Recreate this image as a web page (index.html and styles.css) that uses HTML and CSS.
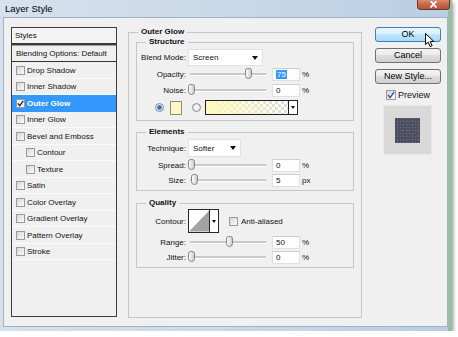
FILE: index.html
```html
<!DOCTYPE html>
<html lang="en">
<head>
  <meta charset="UTF-8">
  <title>Layer Style</title>
  <link rel="stylesheet" href="styles.css">
</head>
<body>
  <div class="window">
    <div class="titlebar">
      <span class="title">Layer Style</span>
      <div class="close">
        <svg width="9" height="7" viewBox="0 0 9 7"><path d="M1.5 0 L7.5 6.5 M7.5 0 L1.5 6.5" stroke="#fff" stroke-width="1.8"/></svg>
      </div>
    </div>

    <div class="client">
      <!-- styles list -->
      <div class="styles">
        <div class="styles-head">Styles</div>
        <div class="styles-blend">Blending Options: Default</div>
        <div class="style-item"><span class="check"></span>Drop Shadow</div>
        <div class="style-item"><span class="check"></span>Inner Shadow</div>
        <div class="style-item selected"><span class="check on"><svg width="7" height="7" viewBox="0 0 7 7"><path d="M0.8 3.4 L2.7 5.6 L6.3 0.8" fill="none" stroke="#222" stroke-width="1.3"/></svg></span>Outer Glow</div>
        <div class="style-item"><span class="check"></span>Inner Glow</div>
        <div class="style-item"><span class="check"></span>Bevel and Emboss</div>
        <div class="style-item sub"><span class="check"></span>Contour</div>
        <div class="style-item sub"><span class="check"></span>Texture</div>
        <div class="style-item"><span class="check"></span>Satin</div>
        <div class="style-item"><span class="check"></span>Color Overlay</div>
        <div class="style-item"><span class="check"></span>Gradient Overlay</div>
        <div class="style-item"><span class="check"></span>Pattern Overlay</div>
        <div class="style-item"><span class="check"></span>Stroke</div>
      </div>

      <!-- settings -->
      <fieldset class="group main">
        <legend>Outer Glow</legend>

        <fieldset class="group inner structure">
          <legend>Structure</legend>
          <div class="row blend-row">
            <span class="lbl">Blend Mode:</span>
            <div class="select blend"><span>Screen</span><i class="arrow"></i></div>
          </div>
          <div class="row slider-row">
            <span class="lbl">Opacity:</span>
            <div class="slider"><span class="thumb" style="left: 75%"></span></div>
            <div class="num"><span class="sel">75</span></div>
            <span class="unit">%</span>
          </div>
          <div class="row slider-row gap2">
            <span class="lbl">Noise:</span>
            <div class="slider"><span class="thumb" style="left: 0%"></span></div>
            <div class="num">0</div>
            <span class="unit">%</span>
          </div>
          <div class="row color-row">
            <span class="radio on"></span>
            <span class="swatch"></span>
            <span class="radio second"></span>
            <div class="gradient">
              <span class="grad-fill"></span>
              <span class="grad-arrow"><i class="arrow"></i></span>
            </div>
          </div>
        </fieldset>

        <fieldset class="group inner elements">
          <legend>Elements</legend>
          <div class="row tech-row">
            <span class="lbl">Technique:</span>
            <div class="select technique"><span>Softer</span><i class="arrow"></i></div>
          </div>
          <div class="row slider-row">
            <span class="lbl">Spread:</span>
            <div class="slider"><span class="thumb" style="left: 0%"></span></div>
            <div class="num">0</div>
            <span class="unit">%</span>
          </div>
          <div class="row slider-row">
            <span class="lbl">Size:</span>
            <div class="slider"><span class="thumb" style="left: 4%"></span></div>
            <div class="num">5</div>
            <span class="unit">px</span>
          </div>
        </fieldset>

        <fieldset class="group inner quality">
          <legend>Quality</legend>
          <div class="row contour-row">
            <span class="lbl">Contour:</span>
            <div class="contour">
              <svg width="21" height="22" viewBox="0 0 21 22"><polygon points="0,22 21,0 21,22" fill="#a3a3a3"/></svg>
              <span class="contour-arrow"><i class="arrow"></i></span>
            </div>
            <span class="check aa"></span>
            <span class="aa-text">Anti-aliased</span>
          </div>
          <div class="row slider-row gap2">
            <span class="lbl">Range:</span>
            <div class="slider"><span class="thumb" style="left: 50%"></span></div>
            <div class="num">50</div>
            <span class="unit">%</span>
          </div>
          <div class="row slider-row">
            <span class="lbl">Jitter:</span>
            <div class="slider"><span class="thumb" style="left: 0%"></span></div>
            <div class="num">0</div>
            <span class="unit">%</span>
          </div>
        </fieldset>
      </fieldset>

      <!-- buttons -->
      <div class="side">
        <button class="btn ok">OK</button>
        <button class="btn">Cancel</button>
        <button class="btn">New Style...</button>
        <div class="preview-check">
          <span class="check big"><svg width="8" height="8" viewBox="0 0 8 8"><path d="M1 4 L3.1 6.6 L7.2 0.8" fill="none" stroke="#2b56a8" stroke-width="1.4"/></svg></span>
          <span>Preview</span>
        </div>
        <div class="preview-box"><span class="preview-swatch"></span></div>
        <svg class="cursor" width="11" height="15" viewBox="0 0 11 15"><path d="M0.5 0.5 L0.5 11.5 L3.2 9.1 L5.1 13.6 L7.1 12.7 L5.2 8.4 L8.8 8.4 Z" fill="#fff" stroke="#000" stroke-width="1"/></svg>
      </div>
    </div>
  </div>
</body>
</html>
```

FILE: styles.css
```css
body {
  margin: 0;
  background: #fff;
  font-family: "Liberation Sans", Arial, sans-serif;
  font-size: 8px;
  color: #111;
}
.window {
  width: 452px;
  height: 331px;
  box-sizing: border-box;
  padding: 0 4px 4px 3px;
  background:
    linear-gradient(to right, transparent 448px, #98bea2 448px),
    linear-gradient(to right, #d6e1ec, #c8d8e8 55%, #b9cee3);
  box-shadow: 1px 2px 4px rgba(0,0,0,0.45);
  display: flex;
  flex-direction: column;
}
.titlebar {
  height: 17px;
  flex: none;
  display: flex;
  justify-content: space-between;
  align-items: flex-start;
}
.title {
  font-size: 9.5px;
  line-height: 11px;
  padding: 3px 0 0 2px;
  color: #000;
}
.close {
  width: 33px;
  height: 10px;
  margin-right: -2px;
  box-sizing: border-box;
  border: 1px solid #6e3322;
  border-top: none;
  border-radius: 0 0 4px 4px;
  background: linear-gradient(#d98b70, #c7664b 50%, #b9533a);
  display: flex;
  justify-content: center;
  align-items: flex-start;
  padding-top: 1px;
}
.client {
  width: 445px;
  height: 310px;
  box-sizing: border-box;
  border: 1px solid #9fb1c3;
  background: #f0f0f0;
  display: flex;
  align-items: flex-start;
  padding: 9px 0 0 7px;
}

/* styles list */
.styles {
  width: 106px;
  height: 290px;
  box-sizing: border-box;
  border: 1px solid #3c3c3c;
  background: #f0f0f0;
  flex: none;
}
.styles-head {
  height: 15px;
  line-height: 15px;
  padding-left: 3px;
  border-bottom: 2px solid #3a3a3a;
  background: #f4f4f4;
}
.styles-blend {
  height: 15px;
  line-height: 15px;
  padding-left: 4px;
  border-top: 1px solid #a0a0a0;
  border-bottom: 1px solid #333;
}
.style-item {
  height: 16.5px;
  display: flex;
  align-items: center;
  padding-left: 4px;
  box-shadow: inset 0 -1px 0 #fafafa;
}
.style-item.sub {
  padding-left: 14px;
}
.style-item.selected {
  background: #3399ff;
  color: #fff;
  font-weight: bold;
  box-shadow: none;
}
.check {
  width: 9px;
  height: 9px;
  box-sizing: border-box;
  border: 1px solid #9a9a9a;
  background: linear-gradient(135deg, #d6d6d6, #fbfbfb);
  margin-right: 2px;
  flex: none;
  display: flex;
  align-items: center;
  justify-content: center;
}
.check.on {
  background: #f4f4f4;
}

/* group boxes */
.group {
  border: 1px solid #c6c6c6;
  margin: 0;
  padding: 0;
  min-width: 0;
}
.group legend {
  font-weight: bold;
  line-height: 10px;
  padding: 0 3px;
}
.main {
  width: 234px;
  height: 291px;
  box-sizing: border-box;
  margin-left: 11px;
  padding: 0 7px;
  flex: none;
}
.main > legend {
  margin-left: 2px;
}
.inner > legend {
  margin-left: 9px;
}
.structure {
  padding-bottom: 5px;
}
.elements {
  margin-top: 6px;
  padding-bottom: 3px;
}
.quality {
  margin-top: 7px;
  padding-bottom: 3px;
}
.row {
  display: flex;
  align-items: center;
}
.lbl {
  width: 49px;
  text-align: right;
  flex: none;
}
.blend-row {
  margin-top: 2px;
  height: 17px;
}
.tech-row {
  margin-top: 2px;
  height: 18px;
}
.slider-row {
  margin-top: 1px;
  height: 14px;
}
.slider-row.gap2 {
  margin-top: 2px;
}
.select {
  height: 100%;
  margin-left: 2px;
  box-sizing: border-box;
  border: 1px solid #e2e2e2;
  background: #fff;
  display: flex;
  align-items: center;
  justify-content: space-between;
  padding: 0 4px;
}
.select.blend {
  width: 75px;
}
.select.technique {
  width: 53px;
}
.arrow {
  width: 0;
  height: 0;
  border-left: 3px solid transparent;
  border-right: 3px solid transparent;
  border-top: 4px solid #111;
}
.slider {
  position: relative;
  width: 76px;
  height: 2px;
  margin-left: 4px;
  background: #c9c9c9;
  border-bottom: 1px solid #fff;
  flex: none;
}
.thumb {
  position: absolute;
  top: -5px;
  width: 7px;
  height: 11px;
  margin-left: -2px;
  box-sizing: border-box;
  border: 1px solid #838383;
  border-radius: 3px 3px 4px 4px;
  background: linear-gradient(to right, #fdfdfd, #cbcbcb);
}
.num {
  width: 28px;
  height: 13px;
  margin-left: 6px;
  box-sizing: border-box;
  border: 1px solid #e0e0e0;
  border-top-color: #cdcdcd;
  background: #fff;
  padding-left: 3px;
  line-height: 11px;
  flex: none;
}
.sel {
  background: #3399ff;
  color: #fff;
  padding: 0 1px;
}
.unit {
  margin-left: 2px;
}
.color-row {
  margin-top: 3px;
  height: 15px;
  padding-left: 18px;
}
.radio {
  width: 9px;
  height: 9px;
  box-sizing: border-box;
  border-radius: 50%;
  border: 1px solid #8c8c8c;
  background: radial-gradient(circle, #fff, #d6d6d6);
  flex: none;
}
.radio.on {
  background: radial-gradient(circle, #2c6fd2 0, #2c6fd2 1.8px, #dedede 2.6px, #f6f6f6);
}
.radio.second {
  margin-left: 10px;
}
.swatch {
  width: 12px;
  height: 14px;
  margin-left: 6px;
  box-sizing: border-box;
  border: 1px solid #8a8a8a;
  background: #fdf5c2;
}
.gradient {
  width: 93px;
  height: 15px;
  margin-left: 4px;
  box-sizing: border-box;
  border: 1px solid #222;
  display: flex;
}
.grad-fill {
  flex: 1;
  background:
    linear-gradient(to right, #fff8bd, rgba(255,248,189,0)),
    repeating-conic-gradient(#dcdcdc 0 25%, #fff 0 50%) 0 0 / 6px 6px;
}
.grad-arrow {
  width: 8px;
  border-left: 1px solid #222;
  background: #fff;
  display: flex;
  align-items: center;
  justify-content: center;
}
.grad-arrow .arrow {
  border-left-width: 2px;
  border-right-width: 2px;
  border-top-width: 3px;
}
.contour-row {
  margin-top: 1px;
  height: 24px;
}
.contour {
  width: 31px;
  height: 24px;
  margin-left: 2px;
  box-sizing: border-box;
  border: 1px solid #262626;
  background: #fff;
  display: flex;
}
.contour-arrow {
  width: 8px;
  border-left: 1px solid #262626;
  display: flex;
  align-items: center;
  justify-content: center;
}
.contour-arrow .arrow {
  border-left-width: 2px;
  border-right-width: 2px;
  border-top-width: 3px;
}
.check.aa {
  margin-left: 10px;
  margin-right: 3px;
}

/* right column */
.side {
  position: relative;
  width: 66px;
  margin-left: 13px;
  display: flex;
  flex-direction: column;
  flex: none;
}
.btn {
  height: 15px;
  margin: 0 0 6px 0;
  padding: 0;
  box-sizing: border-box;
  border: 1px solid #707070;
  border-radius: 3px;
  background: linear-gradient(#f3f3f3, #ebebeb 50%, #dddddd 50%, #cfcfcf);
  font-family: "Liberation Sans", Arial, sans-serif;
  font-size: 9px;
  line-height: 13px;
  color: #000;
}
.btn.ok {
  border-color: #3c7fb1;
  background: linear-gradient(#eaf6fd, #d9f0fc 50%, #bee6fd 50%, #a7d9f5);
}
.preview-check {
  display: flex;
  align-items: center;
  height: 10px;
  padding-left: 11px;
  font-size: 9px;
}
.check.big {
  width: 10px;
  height: 10px;
  margin-right: 2px;
}
.preview-box {
  width: 49px;
  height: 50px;
  margin: 5px 0 0 8px;
  box-sizing: border-box;
  border: 1px solid #e8e8e8;
  background: #d9d9d9;
  display: flex;
  align-items: center;
  justify-content: center;
}
.preview-swatch {
  width: 25px;
  height: 25px;
  background:
    radial-gradient(circle, #8c5a3e 0.5px, transparent 0.9px) 0 0 / 5px 5px,
    radial-gradient(circle, #6a7286 0.6px, transparent 1px) 1px 2px / 3px 3px,
    #4a5062;
}
.cursor {
  position: absolute;
  left: 50px;
  top: 6px;
}
```
